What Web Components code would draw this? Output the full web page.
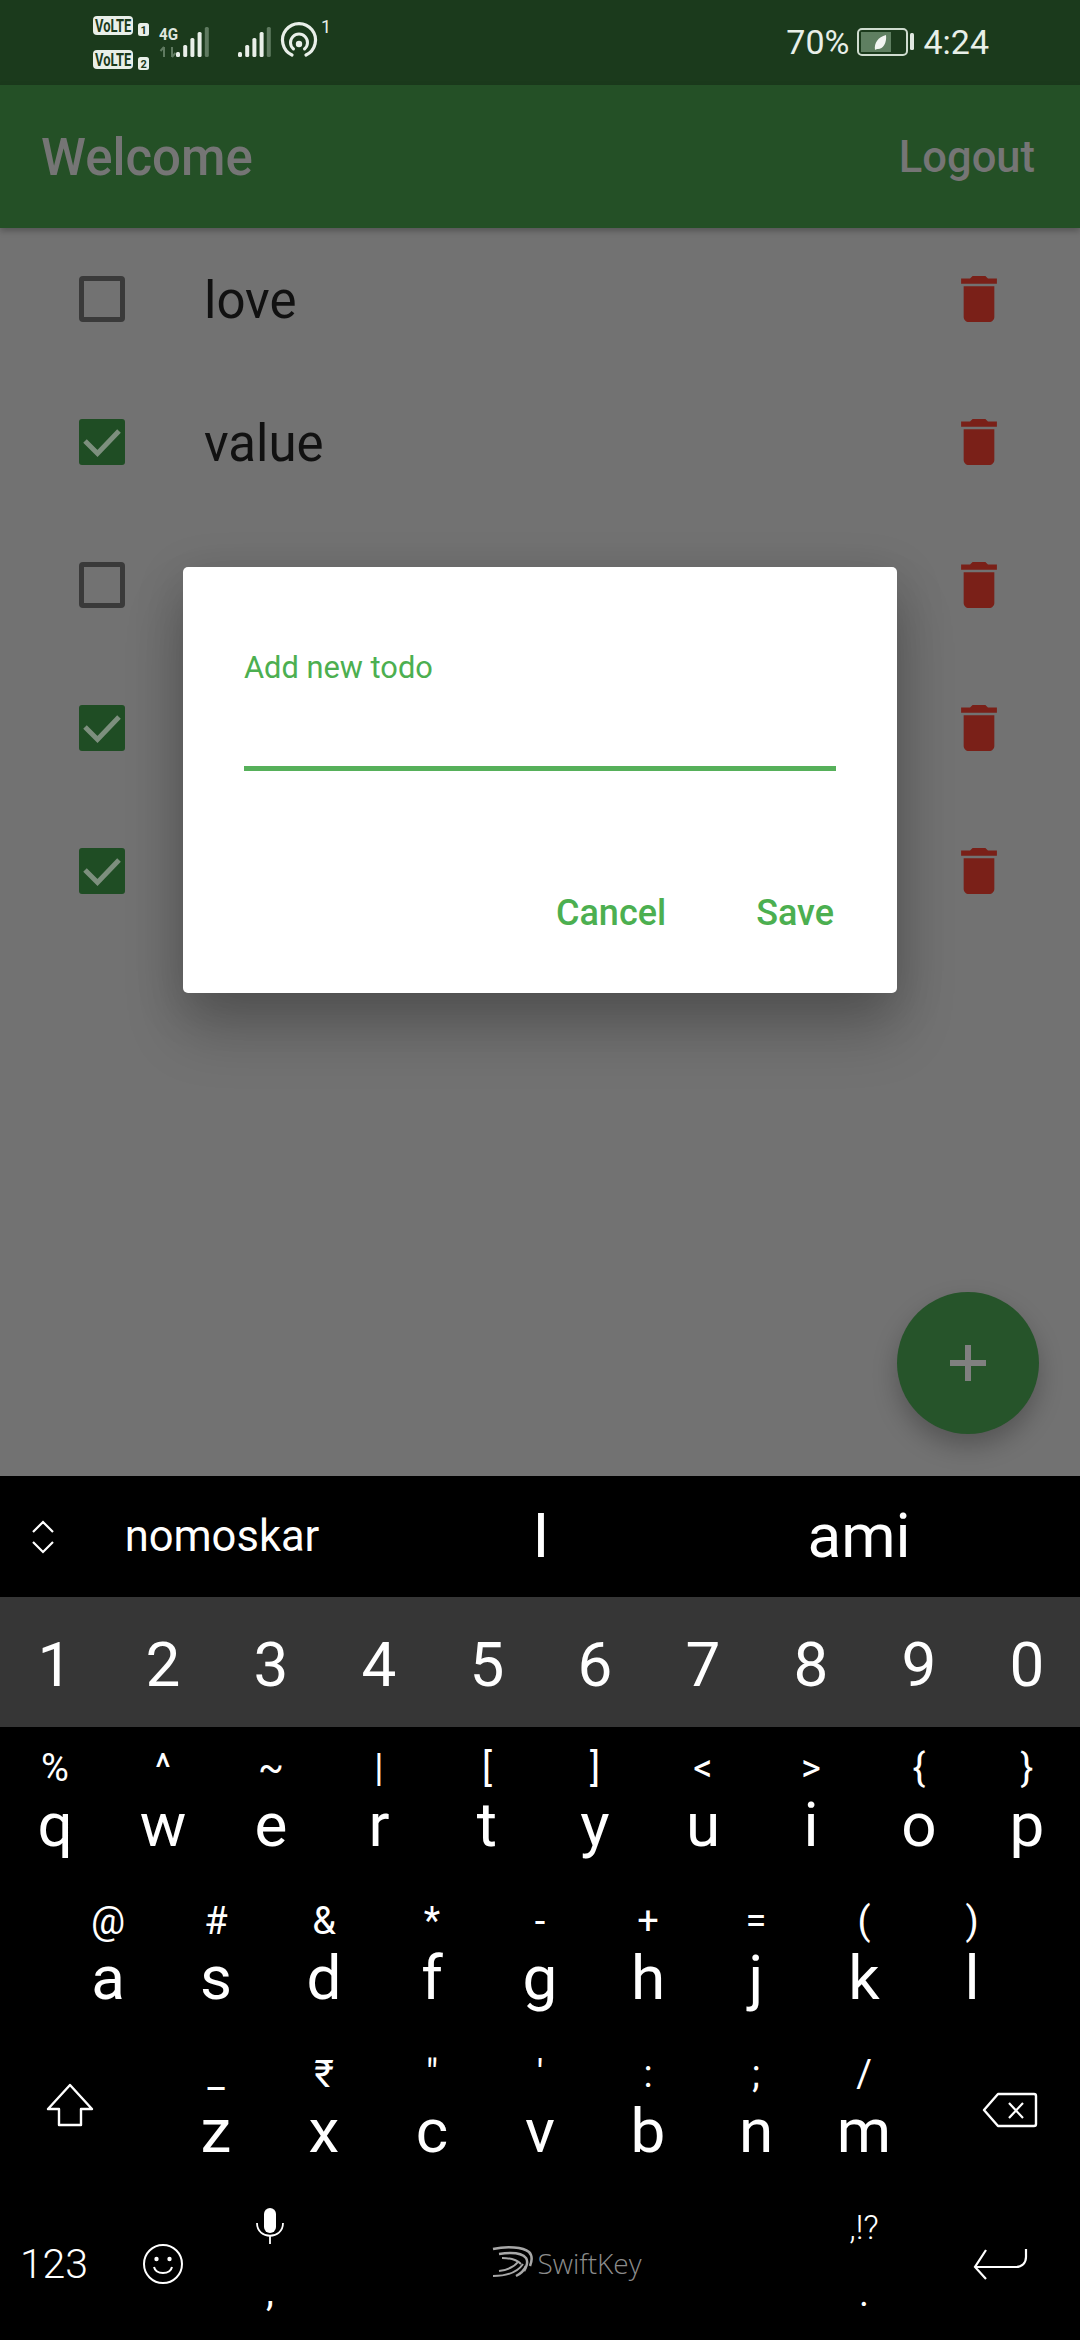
<!DOCTYPE html>
<html lang="en">
<head>
<meta charset="UTF-8">
<title>Todo</title>
<style>
    html,body{margin:0;padding:0;background:#727272}
    body{font-family:Roboto,"Liberation Sans",sans-serif}
    #screen{display:flex;flex-direction:column;width:1080px;height:2340px;overflow:hidden}
    #main{position:relative;flex:1;background:#727272}
</style>
</head>
<body>
<div id="screen">
    <status-bar></status-bar>
    <app-bar>Welcome<span slot="action">Logout</span></app-bar>
    <div id="main">
        <todo-item>love</todo-item>
        <todo-item checked>value</todo-item>
        <todo-item></todo-item>
        <todo-item checked></todo-item>
        <todo-item checked></todo-item>
        <todo-dialog label="Add new todo"></todo-dialog>
        <add-fab></add-fab>
    </div>
    <swift-keyboard></swift-keyboard>
</div>

<script type="text/javascript">
    // small helper, every element just sets its shadow html once
    class Base extends HTMLElement {
        connectedCallback() {
            if(this.shadowRoot) return
            this.attachShadow({mode:"open"}).innerHTML = this.html()
        }
    }

    customElements.define("status-bar", class extends Base {
        html() {
            const bars = (x0, dim) => [0,1,2,3,4].map(i => {
                const top = [52,45,38,32,27][i]
                return `<rect x="${x0 + i*7.2}" y="${top}" width="4" height="${57-top}" rx="1.5" fill="${i==4 ? "#5f7a60" : "#e9efe9"}"/>`
            }).join("")
            return `<style>
                :host{display:flex;align-items:flex-start;justify-content:space-between;height:85px;background:#1b3a1c;color:#e8efe8;font-size:34px;padding:0 91px 0 90px;box-sizing:border-box}
                svg{display:block}
                .right{display:flex;align-items:center;gap:8px;height:85px;padding-bottom:1px;box-sizing:border-box}
                .right span{line-height:85px}
            </style>
            <svg width="250" height="85" viewBox="90 0 250 85" font-family="Roboto">
                <rect x="93" y="16" width="40" height="19" rx="4" fill="#e9efe9"/>
                <text transform="translate(95 31.500) scale(.72 1)" font-size="18" font-weight="700" fill="#1b3a1c">VoLTE</text>
                <rect x="138" y="23" width="11" height="13" rx="2.5" fill="#e9efe9"/>
                <text x="140.5" y="34" font-size="11" font-weight="700" fill="#1b3a1c">1</text>
                <rect x="93" y="50" width="40" height="19" rx="4" fill="#e9efe9"/>
                <text transform="translate(95 65.500) scale(.72 1)" font-size="18" font-weight="700" fill="#1b3a1c">VoLTE</text>
                <rect x="138" y="57" width="11" height="13" rx="2.5" fill="#e9efe9"/>
                <text x="140.5" y="68" font-size="11" font-weight="700" fill="#1b3a1c">2</text>
                <text transform="translate(159 40) scale(.95 1)" font-size="16" font-weight="700" fill="#dfe7df">4G</text>
                <path d="M164 47v10M164 47l-3.5 4M172 57V47M172 57l3.5-4" stroke="#5f7a60" stroke-width="2" fill="none"/>
                ${bars(176)}${bars(238)}
                <path d="M292 55a16.500 16.500 0 1 1 14 0" stroke="#e9efe9" stroke-width="3.200" fill="none" stroke-linecap="round"/>
                <path d="M293.500 49a8.500 8.500 0 1 1 11 0" stroke="#e9efe9" stroke-width="3" fill="none" stroke-linecap="round"/>
                <circle cx="299" cy="44" r="3.200" fill="#e9efe9"/>
                <text x="321" y="33" font-size="18" fill="#e9efe9">1</text>
            </svg>
            <div class="right">
                <span>70%</span>
                <svg width="58" height="30" viewBox="0 0 58 30">
                    <rect x="1" y="2" width="49" height="26" rx="4" fill="none" stroke="#cfdccf" stroke-width="2"/>
                    <rect x="4" y="5" width="30" height="20" fill="#5f7f61"/>
                    <path d="M18 23c-1-7 3-13 11-15 1 8-3 14-8 14-1 0-2 0-3 1z" fill="#f2f5f2"/>
                    <rect x="53" y="6" width="4" height="17" rx="1.500" fill="#e0e7e0"/>
                </svg>
                <span>4:24</span>
            </div>`
        }
    })

    customElements.define("app-bar", class extends Base {
        html() {
            return `<style>
                :host{display:flex;align-items:center;justify-content:space-between;height:143px;padding:0 45px 0 41px;box-sizing:border-box;background:#245026;color:#757575;font-weight:500;position:relative;z-index:1;box-shadow:0 3px 6px rgba(0,0,0,.25)}
                .title{font-size:51px;line-height:143px;padding-top:2px}
                .action{font-size:43.500px;line-height:143px;padding-top:1px}
            </style>
            <div class="title"><slot></slot></div>
            <div class="action"><slot name="action"></slot></div>`
        }
    })

    customElements.define("todo-item", class extends Base {
        html() {
            const box = this.hasAttribute("checked")
                ? `<svg width="46" height="46" viewBox="0 0 46 46"><rect width="46" height="46" rx="3" fill="#1f4d24"/><path d="M6 22l12.500 12.500L40 12" fill="none" stroke="#7d8f7e" stroke-width="5"/></svg>`
                : `<svg width="46" height="46" viewBox="0 0 46 46"><rect x="2.500" y="2.500" width="41" height="41" rx="1.500" fill="none" stroke="#3a3a3a" stroke-width="5"/></svg>`
            return `<style>
                :host{display:flex;align-items:center;height:143px;padding:0 0 1px 79px;box-sizing:border-box;color:#111;font-size:51px}
                svg{display:block;flex:none}
                .text{flex:1;margin-left:79px;padding-top:3px;line-height:60px}
                .del{margin-right:83px}
            </style>
            ${box}
            <div class="text"><slot></slot></div>
            <svg class="del" width="36" height="46" viewBox="5 3 14 18"><path fill="#7a2018" d="M6 19c0 1.100.9 2 2 2h8c1.100 0 2-.9 2-2V7H6v12zM19 4h-3.500l-1-1h-5l-1 1H5v2h14V4z"/></svg>`
        }
    })

    customElements.define("todo-dialog", class extends Base {
        html() {
            return `<style>
                :host{position:absolute;left:183px;top:339px;width:714px;height:426px;box-sizing:border-box;background:#fff;border-radius:5px;padding:0 61px;color:#4caf50;
                    box-shadow:0 38px 60px rgba(0,0,0,.2),0 12px 50px rgba(0,0,0,.16);display:flex;flex-direction:column}
                .label{font-size:30.800px;line-height:40px;margin-top:81px}
                .line{height:5px;background:#56b05a;margin-top:78px}
                .actions{display:flex;justify-content:flex-end;gap:90px;margin-top:120px;padding-right:2px;font-size:36px;font-weight:500;line-height:44px}
            </style>
            <div class="label">${this.getAttribute("label")}</div>
            <div class="line"></div>
            <div class="actions"><span>Cancel</span><span>Save</span></div>`
        }
    })

    customElements.define("add-fab", class extends Base {
        html() {
            return `<style>
                :host{position:absolute;right:41px;bottom:42px;width:142px;height:142px;border-radius:50%;background:#26542a;display:flex;align-items:center;justify-content:center;box-shadow:0 12px 24px rgba(0,0,0,.25)}
                svg{display:block}
            </style>
            <svg width="36" height="36" viewBox="0 0 36 36"><path d="M15 0h6v15h15v6H21v15h-6V21H0v-6h15z" fill="#808080"/></svg>`
        }
    })

    customElements.define("kb-key", class extends Base {
        html() {
            const hint = this.getAttribute("hint")
            return `<style>
                :host{display:flex;flex-direction:column;align-items:center;padding-top:19px;box-sizing:border-box;color:#fff}
                .hint{font-size:38px;line-height:44px;height:44px}
                .main{font-size:62px;line-height:70px}
            </style>
            <div class="hint">${hint}</div>
            <div class="main"><slot></slot></div>`
        }
    })

    customElements.define("swift-keyboard", class extends Base {
        html() {
            const key = (k, h) => `<kb-key hint="${h.replace(/&/g,"&amp;").replace(/"/g,"&quot;").replace(/</g,"&lt;")}">${k}</kb-key>`
            const row = (ks, hs) => [...ks].map((k,i) => key(k, hs[i])).join("")
            const nums = [..."1234567890"].map(n => `<span>${n}</span>`).join("")
            return `<style>
                :host{display:block;height:864px;background:#000;color:#fff;font-family:Roboto,sans-serif}
                svg{display:block}
                .sugg{display:grid;grid-template-columns:63px repeat(3,318px) 63px;height:121px;text-align:center}
                .chev{padding:44px 0 0 31px}
                .s1{font-size:43.500px;line-height:122px}
                .s2{font-size:62px;line-height:119px;padding-left:2px}
                .nums{display:grid;grid-template-columns:repeat(10,108px);height:130px;box-sizing:border-box;background:#363636;text-align:center;font-size:62px;line-height:124px;padding:6px 0 0 1px}
                .row{display:grid;height:153px}
                .r1{grid-template-columns:repeat(10,108px);padding-left:1px}
                .r2{grid-template-columns:repeat(9,108px);padding-left:54px}
                .r3{grid-template-columns:162px repeat(7,108px) 162px}
                .ico{display:flex;justify-content:center;padding-top:50px}
                .bottom{display:grid;grid-template-columns:108px 108px 108px 486px 108px 162px;height:154px}
                .n123{font-size:41px;font-weight:300;text-align:center;line-height:92px;padding-top:32px}
                .smile{padding:57px 0 0 35px}
                .mic{display:flex;flex-direction:column;align-items:center;padding-top:22px}
                .mic span{font-size:40px;line-height:40px;margin-top:28px}
                .logo{display:flex;align-items:flex-start;justify-content:center;padding-top:60px;gap:3px;color:#8c8c8c;font:300 28px/34px "Open Sans",sans-serif}
                .punct{display:flex;flex-direction:column;align-items:center;padding-top:21px;font-size:34px;font-weight:300;line-height:40px}
                .punct b{font-weight:400;font-size:38px;line-height:40px;margin-top:26px}
                .enter{padding:62px 0 0 54px}
            </style>
            <div class="sugg">
                <div class="chev"><svg width="24" height="34" viewBox="0 0 24 34"><path d="M2 12L12 2l10 10M2 22l10 10 10-10" fill="none" stroke="#fff" stroke-width="2.200"/></svg></div>
                <div class="s1">nomoskar</div>
                <div class="s2">I</div>
                <div class="s2">ami</div>
            </div>
            <div class="nums">${nums}</div>
            <div class="row r1">${row("qwertyuiop", ["%","^","~","|","[","]","<",">","{","}"])}</div>
            <div class="row r2">${row("asdfghjkl", ["@","#","&","*","-","+","=","(",")"])}</div>
            <div class="row r3">
                <div class="ico" style="padding-right:22px"><svg width="48" height="44" viewBox="0 0 48 44"><path d="M24 2L2 26h11v16h22V26h11z" fill="none" stroke="#fff" stroke-width="2.400" stroke-linejoin="round"/></svg></div>
                ${row("zxcvbnm", ["_","₹",'"',"'",":",";","/"])}
                <div class="ico" style="padding-top:59px;padding-left:22px"><svg width="56" height="36" viewBox="0 0 56 36"><path d="M16 2h36a2 2 0 0 1 2 2v28a2 2 0 0 1-2 2H16L2 18z" fill="none" stroke="#fff" stroke-width="2.400" stroke-linejoin="round"/><path d="M27 11l14 15M41 11L27 26" stroke="#fff" stroke-width="2.200"/></svg></div>
            </div>
            <div class="bottom">
                <div class="n123">123</div>
                <div class="smile"><svg width="40" height="42" viewBox="0 0 40 42"><circle cx="20" cy="21" r="19" fill="none" stroke="#fff" stroke-width="2"/><circle cx="13.500" cy="16" r="2.200" fill="#fff"/><circle cx="26.500" cy="16" r="2.200" fill="#fff"/><path d="M11 24c2 8 16 8 18 0" fill="none" stroke="#fff" stroke-width="2"/></svg></div>
                <div class="mic"><svg width="28" height="36" viewBox="0 0 28 36"><rect x="8" y="0" width="12" height="25" rx="6" fill="#fff"/><path d="M1 15c0 17 26 17 26 0M14 28v8" fill="none" stroke="#fff" stroke-width="1.800"/></svg><span>,</span></div>
                <div class="logo"><svg width="42" height="32" viewBox="0 0 42 32" fill="none" stroke="#a8a8a8"><path stroke-width="2.500" d="M1 3c14-3 30-2 36 3 4 4 3 9 1 14"/><path stroke-width="2.500" d="M7 8c13-2 23-1 27 4 2 3 1 8-2 13"/><path stroke-width="2" d="M10 12c8 0 15 2 19 6"/><path stroke-width="2" d="M1 30c12 0 24-3 30-12"/><path stroke-width="2" d="M7 25c8-1 15-4 19-9"/><path stroke-width="2.500" d="M24 30c4-2 8-5 10-10"/></svg><span>SwiftKey</span></div>
                <div class="punct"><span>,!?</span><b>.</b></div>
                <div class="enter"><svg width="56" height="32" viewBox="0 0 56 32"><path d="M54 1v8c0 6-4 10-10 10H3M14 2L3 19l11 12" fill="none" stroke="#fff" stroke-width="2.200"/></svg></div>
            </div>`
        }
    })
</script>
</body>
</html>
